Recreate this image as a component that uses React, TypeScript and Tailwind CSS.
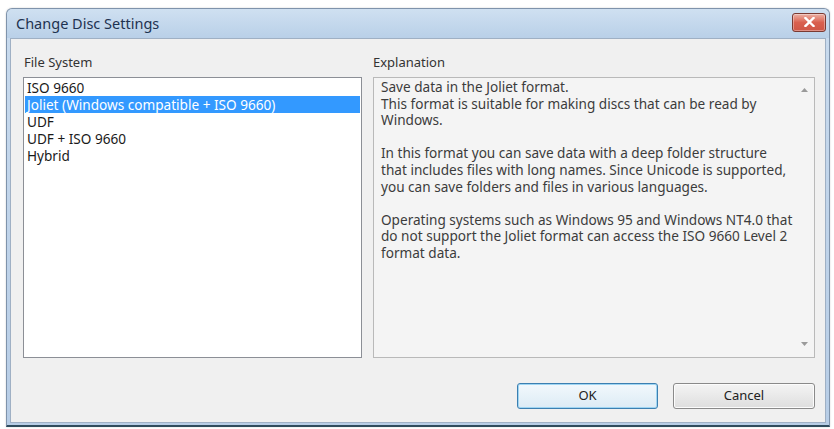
import React from "react";

const font = { fontFamily: '"Noto Sans", "Open Sans", Arial, sans-serif' };

function ArrowUp() {
  return (
    <svg width="7" height="4" viewBox="0 0 7 4">
      <path d="M0 4 L3.5 0 L7 4 Z" fill="#9a9a9a" />
    </svg>
  );
}
function ArrowDown() {
  return (
    <svg width="7" height="4" viewBox="0 0 7 4">
      <path d="M0 0 L3.5 4 L7 0 Z" fill="#9a9a9a" />
    </svg>
  );
}

export default function App() {
  const items = [
    "ISO 9660",
    "Joliet (Windows compatible + ISO 9660)",
    "UDF",
    "UDF + ISO 9660",
    "Hybrid",
  ];
  return (
    <div className="w-[834px] h-[429px] bg-white overflow-hidden" style={font}>
      <div className="ml-[6px] mt-[8px] w-[824px] h-[419px] flex flex-col rounded-t-[6px] border border-[#7f93ab] border-b-[#2f4b5c] border-b-2 bg-gradient-to-b from-[#c9dbee] to-[#b7cde6] shadow-[0_0_2px_rgba(0,0,0,0.2)]">
        {/* Title bar */}
        <div className="h-[29px] flex items-center justify-between pl-[9px] pr-[3px] bg-gradient-to-b from-[#cfe0f1] to-[#b9d0e8] rounded-t-[6px]">
          <span className="text-[14.5px] text-[#1e3250] leading-none">Change Disc Settings</span>
          <div className="mt-[-3px] w-[34px] h-[19px] rounded-[3px] border border-[#7a3a32] bg-gradient-to-b from-[#eab0a5] via-[#d9604f] to-[#cf5646] flex items-center justify-center shadow-[inset_0_0_0_1px_rgba(255,255,255,0.35)]">
            <svg width="11" height="10" viewBox="0 0 11 10">
              <path d="M1.5 1 L9.5 9 M9.5 1 L1.5 9" stroke="#ffffff" strokeWidth="2.4" strokeLinecap="square" />
            </svg>
          </div>
        </div>
        {/* Frame + client */}
        <div className="flex-1 px-[3px] pb-[2px] flex">
          <div className="flex-1 flex flex-col border border-[#9fb0c4] bg-[#f0f0f0] pt-[15px] pl-[12px] pr-[10px]">
            <div className="flex gap-[11px]">
              {/* Left column */}
              <div className="flex flex-col w-[339px]">
                <div className="text-[13px] leading-[17px] text-[#333] pl-[1px] mb-[6px]">File System</div>
                <div className="h-[281px] bg-white border border-[#8c8f96] px-[1px] pt-[1px]">
                  {items.map((it, i) => (
                    <div
                      key={it}
                      className={
                        i === 1
                          ? "h-[17px] leading-[17px] text-[13.6px] px-[2px] bg-[#3399ff] text-white"
                          : "h-[17px] leading-[17px] text-[13.6px] px-[2px] text-[#1a1a1a]"
                      }
                    >
                      {it}
                    </div>
                  ))}
                </div>
              </div>
              {/* Right column */}
              <div className="flex flex-col flex-1">
                <div className="text-[13px] leading-[17px] text-[#333] mb-[6px]">Explanation</div>
                <div className="h-[281px] bg-[#f4f4f4] border border-[#b9b9b9] flex">
                  <div className="w-[420px] pl-[7px] pt-[1px] text-[13.6px] leading-[16.6px] text-[#3c3c3c]">
                    <p>Save data in the Joliet format.</p>
                    <p>This format is suitable for making discs that can be read by Windows.</p>
                    <p className="mt-[16.6px]">
                      In this format you can save data with a deep folder structure that includes files with long names. Since Unicode is supported, you can save folders and files in various languages.
                    </p>
                    <p className="mt-[16.6px]">
                      Operating systems such as Windows 95 and Windows NT4.0 that do not support the Joliet format can access the ISO 9660 Level 2 format data.
                    </p>
                  </div>
                  <div className="flex-1 flex flex-col items-center justify-between pt-[10px] pb-[11px]">
                    <ArrowUp />
                    <ArrowDown />
                  </div>
                </div>
              </div>
            </div>
            {/* Buttons */}
            <div className="flex justify-end gap-[15px] mt-[25px]">
              <button className="w-[141px] h-[26px] rounded-[3px] border border-[#3c7fb1] bg-gradient-to-b from-[#f2f8fc] to-[#dcebf5] shadow-[inset_0_0_0_1px_#9fd5f2] text-[13px] text-[#222]">
                OK
              </button>
              <button className="w-[142px] h-[26px] rounded-[3px] border border-[#8a8a8a] bg-gradient-to-b from-[#f4f4f4] to-[#dedede] shadow-[inset_0_0_0_1px_#fcfcfc] text-[13px] text-[#222]">
                Cancel
              </button>
            </div>
          </div>
        </div>
      </div>
    </div>
  );
}
